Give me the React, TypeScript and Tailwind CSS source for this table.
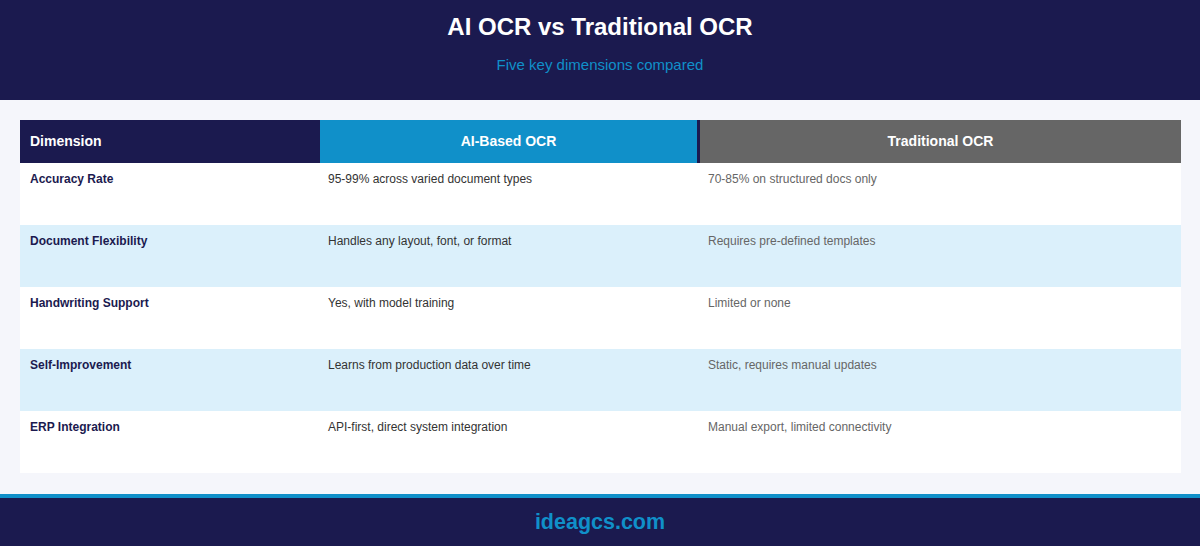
const ROWS = [
  { dim: 'Accuracy Rate', ai: '95-99% across varied document types', trad: '70-85% on structured docs only' },
  { dim: 'Document Flexibility', ai: 'Handles any layout, font, or format', trad: 'Requires pre-defined templates' },
  { dim: 'Handwriting Support', ai: 'Yes, with model training', trad: 'Limited or none' },
  { dim: 'Self-Improvement', ai: 'Learns from production data over time', trad: 'Static, requires manual updates' },
  { dim: 'ERP Integration', ai: 'API-first, direct system integration', trad: 'Manual export, limited connectivity' },
];

export default function App() {
  return (
    <div className="w-[1200px] h-[546px] flex flex-col bg-[#f5f6fb] font-['Liberation_Sans',Arial,sans-serif]">
      <div className="h-[100px] bg-[#1b1a4f] flex flex-col items-center pt-[12px]">
        <h1 className="text-[24px] leading-[30px] font-bold text-white">AI OCR vs Traditional OCR</h1>
        <p className="mt-[14px] text-[15px] leading-[18px] text-[#1090c9]">Five key dimensions compared</p>
      </div>

      <div className="flex-1 pl-5 pr-[19px] pt-5">
        <div className="flex h-[43px] text-[14px] font-bold text-white">
          <div className="w-[300px] bg-[#1b1a4f] flex items-center pl-[10px]">Dimension</div>
          <div className="w-[377px] bg-[#1090c9] flex items-center justify-center">AI-Based OCR</div>
          <div className="flex-1 bg-[#666666] border-l-[3px] border-[#1b1a4f] flex items-center justify-center">Traditional OCR</div>
        </div>
        {ROWS.map((row, i) => (
          <div key={row.dim} className={`flex h-[62px] text-[12px] leading-[16px] pt-[8px] ${i % 2 === 1 ? 'bg-[#dbf0fb]' : 'bg-white'}`}>
            <div className="w-[300px] pl-[10px] font-bold text-[#1b1a4f]">{row.dim}</div>
            <div className="w-[377px] pl-[8px] text-[#333333]">{row.ai}</div>
            <div className="flex-1 pl-[11px] text-[#666666]">{row.trad}</div>
          </div>
        ))}
      </div>

      <div className="h-[4px] bg-[#1090c9]" />
      <div className="h-[48px] bg-[#1b1a4f] flex items-center justify-center">
        <span className="text-[21.5px] font-bold text-[#1090c9]">ideagcs.com</span>
      </div>
    </div>
  );
}
